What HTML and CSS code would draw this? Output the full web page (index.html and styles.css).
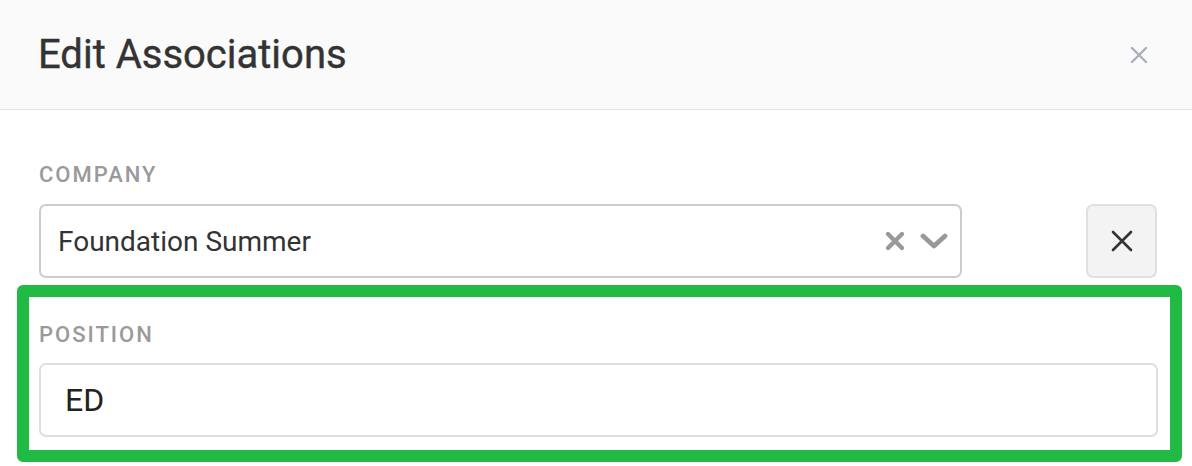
FILE: index.html
```html
<!DOCTYPE html>
<html>
<head>
<meta charset="utf-8">
<link rel="stylesheet" href="styles.css">
</head>
<body>
<div class="modal">
  <div class="header">
    <h1 class="title">Edit Associations</h1>
    <button class="close" aria-label="Close">
      <svg width="18" height="18" viewBox="0 0 18 18"><path d="M2 2L16 16M16 2L2 16" stroke="#a9afb8" stroke-width="2.4" stroke-linecap="round"/></svg>
    </button>
  </div>
  <div class="content">
    <div class="field">
      <div class="label">COMPANY</div>
      <div class="row">
        <div class="select">
          <span class="value">Foundation Summer</span>
          <span class="indicators">
            <svg class="clear" width="22" height="22" viewBox="0 0 22 22"><path d="M4 4L18 18M18 4L4 18" stroke="#999" stroke-width="4.4" stroke-linecap="round"/></svg>
            <svg class="chev" width="28" height="20" viewBox="0 0 28 20"><path d="M3 5L14 15L25 5" fill="none" stroke="#999" stroke-width="4.8" stroke-linecap="round" stroke-linejoin="round"/></svg>
          </span>
        </div>
        <button class="remove" aria-label="Remove">
          <svg width="24" height="24" viewBox="0 0 24 24"><path d="M3 3L21 21M21 3L3 21" stroke="#333" stroke-width="2.6" stroke-linecap="round"/></svg>
        </button>
      </div>
    </div>
    <div class="highlight">
      <div class="label">POSITION</div>
      <div class="input">ED</div>
    </div>
  </div>
</div>
</body>
</html>
```
FILE: styles.css
```css
html, body {
  margin: 0;
  padding: 0;
  background: #fff;
}
body {
  font-family: Roboto, "Liberation Sans", Arial, sans-serif;
  width: 1192px;
  height: 466px;
  overflow: hidden;
}
.header {
  height: 109px;
  background: #fafafa;
  border-bottom: 1px solid #e6e6e8;
  display: flex;
  align-items: center;
  justify-content: space-between;
  padding: 0 44px 0 38px;
  box-sizing: content-box;
}
.title {
  margin: 0;
  font-size: 40px;
  font-weight: 400;
  color: #333;
  -webkit-text-stroke: 0.4px #333;
}
.close {
  border: none;
  background: none;
  padding: 0;
  width: 18px;
  height: 18px;
  display: flex;
}
.field {
  padding: 53px 35px 0 39px;
}
.label {
  font-size: 22px;
  font-weight: 500;
  color: #9a9a9a;
  letter-spacing: 2px;
  line-height: 24px;
}
.row {
  display: flex;
  justify-content: space-between;
  margin-top: 17px;
}
.select {
  width: 923px;
  height: 74px;
  box-sizing: border-box;
  border: 2px solid #cccccc;
  border-radius: 7px;
  display: flex;
  align-items: center;
  padding: 0 12px 0 17px;
}
.value {
  flex: 1;
  font-size: 28px;
  color: #333;
}
.indicators {
  display: flex;
  align-items: center;
  gap: 14px;
}
.remove {
  width: 71px;
  height: 74px;
  box-sizing: border-box;
  border: 2px solid #e0e0e3;
  background: #f3f3f3;
  border-radius: 7px;
  display: flex;
  align-items: center;
  justify-content: center;
  padding: 0;
}
.highlight {
  margin: 7px 10px 0 17px;
  border: 12px solid #21ba45;
  border-radius: 6px;
  padding: 26px 12px 13px 10px;
}
.highlight .label {
  margin-bottom: 16px;
}
.input {
  height: 74px;
  box-sizing: border-box;
  border: 2px solid #dedee2;
  border-radius: 7px;
  display: flex;
  align-items: center;
  padding: 0 24px 0 24px;
  font-size: 32px;
  color: #222;
}
```
